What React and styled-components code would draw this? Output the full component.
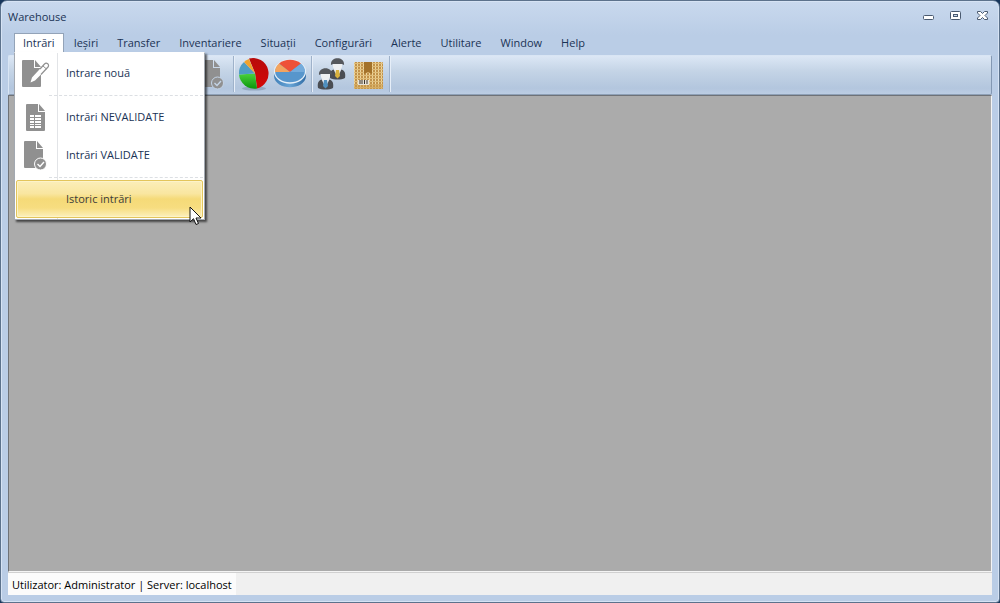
import React from 'react'
import styled, { createGlobalStyle, css } from 'styled-components'

const GlobalStyle = createGlobalStyle`
  * { box-sizing: border-box; }
  body {
    margin: 0;
    background: #17365c;
    font-family: "Open Sans", "Noto Sans", sans-serif;
    font-size: 11px;
    color: #1a3355;
  }
  button { font: inherit; color: inherit; }
`

const StyleWindow = styled.div`
  min-height: 100vh;
  display: flex;
  flex-direction: column;
  padding: 0 7px 7px;
  border: 1px solid #5c728c;
  border-radius: 7px 7px 4px 4px;
  background: linear-gradient(#c9d9ee, #bacde6 34px);
  box-shadow: inset 0 0 0 1px #d6e3f4;
`
const StyleTitleBar = styled.header`
  height: 32px;
  padding-bottom: 2px;
  display: flex;
  align-items: center;
  justify-content: space-between;
`
const StyleTitle = styled.h1`
  margin: 0;
  font-size: 11px;
  font-weight: normal;
`
const StyleControls = styled.div`
  display: flex;
  margin: 0 -4px 2px 0;
`
const StyleControl = styled.button`
  width: 27px;
  height: 20px;
  padding: 0;
  border: 0;
  background: none;
  display: flex;
  align-items: center;
  justify-content: center;
`
const StyleMenuBar = styled.nav`
  display: flex;
  gap: 1px;
  height: 21px;
  padding-left: 6px;
`
const StyleMenu = styled.div`
  position: relative;
`
const StyleTab = styled.button`
  height: 21px;
  padding: 0 8px 2px;
  border: 1px solid transparent;
  border-bottom: 0;
  background: none;
  line-height: 16px;
  white-space: nowrap;
  ${({ $open }) => $open && css`
    border-color: #93a3b8;
    background: #fff;
  `}
`
const StyleDropdown = styled.div`
  position: absolute;
  z-index: 2;
  top: 19px;
  left: 0;
  width: 191px;
  padding: 1px;
  border: 1px solid #a3a9b1;
  border-top-color: #fff;
  background: linear-gradient(90deg, transparent 42px, #e2e4e7 42px, #e2e4e7 43px, transparent 43px) #fff;
  box-shadow: 2px 2px 2px rgba(0, 0, 0, 0.6);
`
const StyleItem = styled.button`
  width: 100%;
  height: 38px;
  padding: 0;
  border: 1px solid transparent;
  border-radius: 2px;
  background: none;
  display: flex;
  align-items: center;
  text-align: left;
  ${({ $hot }) => $hot && css`
    border-color: #e3c55b;
    background: linear-gradient(#fbeeb9, #f9e6a0 35%, #f5da78 50%, #f7dd80 75%, #fcf0bd);
    box-shadow: inset 0 0 0 1px #fdf3c8;
    color: #3b3b3b;
  `}
`
const StyleItemIcon = styled.span`
  width: 49px;
  padding-left: 2px;
  display: flex;
`
const StyleItemLabel = styled.span`
  padding-bottom: 2px;
`
const StyleSeparator = styled.hr`
  height: 1px;
  margin: 3px 0 2px 33px;
  border: 0;
  border-top: 1px dashed #dcdfe3;
`
const StyleToolbar = styled.div`
  display: flex;
  align-items: center;
  height: 40px;
  margin-top: 1px;
  padding: 0 0 2px 5px;
  border: 1px solid #d9e5f4;
  border-right-color: #8398b3;
  border-bottom-color: #8ea0b6;
  border-radius: 2px;
  background: linear-gradient(#dce7f5, #c4d4e6 40%, #b3c6de 85%, #bccde3);
`
const StyleTool = styled.button`
  width: 36px;
  height: 36px;
  padding: 0;
  border: 0;
  background: none;
  display: flex;
  align-items: center;
  justify-content: center;
`
const StyleDivider = styled.span`
  width: 6px;
  height: 36px;
  background: linear-gradient(90deg, transparent 3px, #9fb2ca 3px, #9fb2ca 4px, #e6eef8 4px, #e6eef8 5px, transparent 5px);
`
const StyleWorkspace = styled.main`
  flex: 1;
  border: 1px solid #6f7277;
  border-right-color: #f4f4f4;
  border-bottom-color: #f4f4f4;
  background: #ababab;
`
const StyleStatusBar = styled.footer`
  display: flex;
  height: 23px;
  border-top: 1px solid #d0d0d0;
  background: #f0f0f0;
`
const StyleStatus = styled.span`
  padding: 0 4px;
  background: #fbfbfb;
  color: #000;
  line-height: 24px;
`
const StyleCursor = styled.svg`
  position: absolute;
  z-index: 3;
  left: 174px;
  top: 153px;
  pointer-events: none;
`

const MinimizeIcon = () => (
  <svg width="13" height="13" viewBox="0 0 13 13">
    <rect x="1.5" y="6.5" width="10" height="4" rx="1" fill="#fff" stroke="#4a5a70" />
  </svg>
)
const MaximizeIcon = () => (
  <svg width="13" height="13" viewBox="0 0 13 13">
    <rect x="1.5" y="2.5" width="10" height="8" rx="1" fill="#fff" stroke="#4a5a70" />
    <rect x="4.5" y="5.5" width="4" height="2" fill="#c9d9ee" stroke="#4a5a70" />
  </svg>
)
const CloseIcon = () => (
  <svg width="13" height="13" viewBox="0 0 13 13">
    <path d="M1.5 2.5h3l2 2 2-2h3v1.5l-2.5 2.5 2.5 2.5v1.5h-3l-2-2-2 2h-3V9L4 6.500 1.500 4z" fill="#fff" stroke="#4a5a70" />
  </svg>
)

const NewDocIcon = () => (
  <svg width="32" height="32" viewBox="0 0 32 32">
    <path d="M4 3h11v8h7v18a1 1 0 0 1-1 1H4a1 1 0 0 1-1-1V4a1 1 0 0 1 1-1z" fill="#909090" />
    <path d="M16 3l6 7h-6z" fill="#909090" />
    <path d="M11.500 25.500l1.500-5L25 7.500a2.200 2.200 0 0 1 4 3L16 23.500z" fill="#fff" />
    <path d="M21 12l4.500-5a2 2 0 0 1 3.500 3L22 17.500" fill="none" stroke="#909090" strokeWidth="1.200" />
    <path d="M24 9l3.500 3" stroke="#909090" />
  </svg>
)
const ListDocIcon = () => (
  <svg width="32" height="32" viewBox="0 0 32 32">
    <path d="M8 3h11v8h7v18a1 1 0 0 1-1 1H8a1 1 0 0 1-1-1V4a1 1 0 0 1 1-1z" fill="#909090" />
    <path d="M20 3l6 7h-6z" fill="#909090" />
    <path d="M11 14h11v13H11z" fill="#fff" />
    <path d="M11 16.500h11M11 19.500h11M11 22.500h11M11 24.500h11M15.500 14v13" stroke="#909090" />
  </svg>
)
const CheckDocIcon = ({ check = '#fff' }) => (
  <svg width="32" height="32" viewBox="0 0 32 32">
    <path d="M6 2h11v8h7v10a6 6 0 0 0-7 9H6a1 1 0 0 1-1-1V3a1 1 0 0 1 1-1z" fill="#909090" />
    <path d="M18 2l6 7h-6z" fill="#909090" />
    <circle cx="21.500" cy="25" r="6" fill="#909090" stroke={check} />
    <path d="M18.500 25l2.500 2.500 4-4.500" fill="none" stroke={check} strokeWidth="1.400" />
  </svg>
)
const PieIcon = () => (
  <svg width="34" height="34" viewBox="0 0 34 34">
    <defs>
      <linearGradient id="pieRed" x2="0" y2="1">
        <stop offset="0" stopColor="#b80a0a" />
        <stop offset="1" stopColor="#d40808" />
      </linearGradient>
      <linearGradient id="pieGreen" x2="0" y2="1">
        <stop offset="0" stopColor="#4ad23c" />
        <stop offset="1" stopColor="#0c960c" />
      </linearGradient>
    </defs>
    <ellipse cx="17" cy="31.500" rx="12" ry="2" fill="#7f93ab" opacity="0.6" />
    <path d="M18 16L12 1.500a15.500 15.500 0 1 1 8 30z" fill="url(#pieRed)" />
    <path d="M18 16.500L2 17.500A15.500 15.500 0 0 0 20 31.500z" fill="url(#pieGreen)" />
    <path d="M18 16.500L7 5a15 15 0 0 0-5 12.500z" fill="#4f9dc4" />
    <path d="M18 16.500L12 2a14 14 0 0 0-5 3z" fill="#f0a32c" />
  </svg>
)
const DiscIcon = () => (
  <svg width="34" height="34" viewBox="0 0 34 34">
    <defs>
      <linearGradient id="discSide">
        <stop offset="0" stopColor="#3f7fb8" />
        <stop offset="0.5" stopColor="#69a5d6" />
        <stop offset="1" stopColor="#2f6ba4" />
      </linearGradient>
    </defs>
    <path d="M1 14v5c1 15 31 15 32 0v-5z" fill="url(#discSide)" />
    <ellipse cx="17" cy="14.500" rx="15.500" ry="11.500" fill="#5796cc" stroke="#e5eff8" strokeWidth="1.300" />
    <path d="M17 15L6 6.500c6-5 16-5 22 0z" fill="#ee5138" />
    <path d="M17 15H2c0-3 1-6 4-8.500z" fill="#f3a45f" />
    <path d="M17 15h15c0-3-1-6-4-8.500z" fill="#74abdb" />
  </svg>
)
const Person = ({ x, y, tie }) => (
  <g transform={`translate(${x} ${y})`}>
    <path d="M1 20c-1-6 1-8 5-9h5c4 1 6 3 5 9-4 2-11 2-15 0z" fill="#4a4d53" />
    <path d="M4.500 11l4 9 4-9z" fill="#e9edf2" />
    <path d="M7 12h3l1 6-2.500 2.500L6 18z" fill={tie} />
    <path d="M4 5h9v4c-1 4-8 4-9 0z" fill="#eef0f2" />
    <path d="M2 7c-1-9 14-9 13 0l-2-1H4z" fill="#55585d" />
  </g>
)
const UsersIcon = () => (
  <svg width="34" height="34" viewBox="0 0 34 34">
    <Person x={14} y={1} tie="#d8b13e" />
    <Person x={2} y={11} tie="#4f8fbf" />
  </svg>
)
const BoxIcon = () => (
  <svg width="34" height="34" viewBox="0 0 34 34">
    <defs>
      <pattern id="weave" width="3" height="3" patternUnits="userSpaceOnUse">
        <rect width="3" height="3" fill="#c2924a" />
        <rect width="1" height="3" fill="#ecd59d" />
        <rect width="3" height="1" fill="#dfbd79" />
      </pattern>
    </defs>
    <rect x="3" y="5" width="29" height="27" rx="1" fill="url(#weave)" />
    <path d="M3 27h29v5H3z" fill="#c99c4d" opacity="0.5" />
    <path d="M13 5h8v12l-4-2-4 2z" fill="#a3722a" />
    <rect x="7" y="23" width="11" height="5" fill="#e8e2d6" />
    <path d="M9 23v4M11 23v4M13.500 23v4M16 23v4" stroke="#3a3329" />
  </svg>
)

const items = [
  { label: 'Intrare nouă', icon: <NewDocIcon /> },
  null,
  { label: 'Intrări NEVALIDATE', icon: <ListDocIcon /> },
  { label: 'Intrări VALIDATE', icon: <CheckDocIcon /> },
  null,
  { label: 'Istoric intrări', hot: true },
]
const menus = ['Intrări', 'Ieșiri', 'Transfer', 'Inventariere', 'Situații', 'Configurări', 'Alerte', 'Utilitare', 'Window', 'Help']
const tools = [
  { label: 'Intrare nouă', Icon: NewDocIcon },
  { label: 'Intrări NEVALIDATE', Icon: ListDocIcon },
  { label: 'Intrări VALIDATE', Icon: CheckDocIcon },
  { label: 'Ieșire nouă', Icon: NewDocIcon },
  { label: 'Ieșiri NEVALIDATE', Icon: ListDocIcon },
  { label: 'Ieșiri VALIDATE', Icon: CheckDocIcon },
  null,
  { label: 'Situații', Icon: PieIcon },
  { label: 'Inventariere', Icon: DiscIcon },
  null,
  { label: 'Utilizatori', Icon: UsersIcon },
  { label: 'Produse', Icon: BoxIcon },
  null,
]

const Dropdown = () => (
  <StyleDropdown>
    {items.map((item, i) => item ? (
      <StyleItem key={i} $hot={item.hot}>
        <StyleItemIcon>{item.icon}</StyleItemIcon>
        <StyleItemLabel>{item.label}</StyleItemLabel>
      </StyleItem>
    ) : <StyleSeparator key={i} />)}
    <StyleCursor width="13" height="20" viewBox="0 0 13 20">
      <path d="M1 1v15l3.500-3.300L7 18.500l2.500-1L7 12h5z" fill="#fff" stroke="#111" />
    </StyleCursor>
  </StyleDropdown>
)

const App = () => {
  return (
    <StyleWindow>
      <GlobalStyle />
      <StyleTitleBar>
        <StyleTitle>Warehouse</StyleTitle>
        <StyleControls>
          <StyleControl aria-label="Minimize"><MinimizeIcon /></StyleControl>
          <StyleControl aria-label="Maximize"><MaximizeIcon /></StyleControl>
          <StyleControl aria-label="Close"><CloseIcon /></StyleControl>
        </StyleControls>
      </StyleTitleBar>
      <StyleMenuBar>
        {menus.map((name, i) => (
          <StyleMenu key={name}>
            <StyleTab $open={i === 0}>{name}</StyleTab>
            {i === 0 && <Dropdown />}
          </StyleMenu>
        ))}
      </StyleMenuBar>
      <StyleToolbar>
        {tools.map((tool, i) => tool
          ? <StyleTool key={i} aria-label={tool.label}><tool.Icon check="#c4d4e6" /></StyleTool>
          : <StyleDivider key={i} />)}
      </StyleToolbar>
      <StyleWorkspace />
      <StyleStatusBar>
        <StyleStatus>Utilizator: Administrator | Server: localhost</StyleStatus>
      </StyleStatusBar>
    </StyleWindow>
  )
}

export default App
